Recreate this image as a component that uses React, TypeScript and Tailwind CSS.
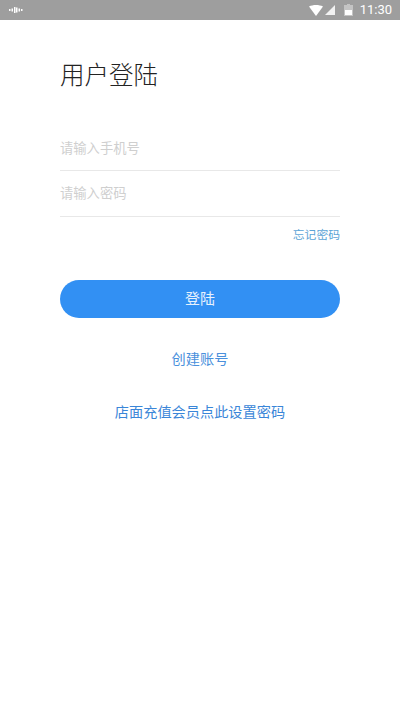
import { useState } from "react";

const font = { fontFamily: '"Noto Sans CJK SC", "Liberation Sans", sans-serif' };

function StatusBar() {
  return (
    <div className="flex h-5 items-center justify-between bg-[#9e9e9e] pl-[8px] pr-[8px]">
      <svg width="16" height="8" viewBox="0 0 16 8" fill="#fff">
        <rect x="1" y="3" width="1.5" height="2" />
        <rect x="3.5" y="2.5" width="1.5" height="3" />
        <rect x="6" y="1" width="1.5" height="6" />
        <rect x="8" y="1.5" width="1.5" height="5" />
        <rect x="10.5" y="2.5" width="1.5" height="3" />
        <rect x="13" y="3" width="1.5" height="2" />
      </svg>
      <div className="flex items-center">
        <svg width="14" height="11" viewBox="0 0 14 11" fill="#fff" className="mr-[2px]">
          <path d="M0 1.5C2 0.5 4.5 0 7 0s5 .5 7 1.5L7 11z" />
        </svg>
        <svg width="10" height="10" viewBox="0 0 10 10" fill="#f2f2f2" className="mr-[9px]">
          <path d="M10 0v10H0z" />
        </svg>
        <svg width="9" height="12" viewBox="0 0 9 12" className="mr-[7px]">
          <path d="M3 0h3v1h3v11H0V1h3z" fill="#c4c4c4" />
          <path d="M1 6h7v5H1z" fill="#fff" />
        </svg>
        <span className="text-[13px] leading-5 text-white" style={{ fontFamily: "Roboto, sans-serif" }}>
          11:30
        </span>
      </div>
    </div>
  );
}

export default function App() {
  const [phone, setPhone] = useState("");
  const [password, setPassword] = useState("");

  return (
    <div className="flex h-[711px] w-[400px] flex-col overflow-hidden bg-white" style={font}>
      <StatusBar />
      <main className="flex flex-col px-[60px]">
        <h1 className="mt-[36px] text-[24.5px] leading-[36px] font-light text-[#222]">用户登陆</h1>

        <div className="mt-[34px] flex h-[45px] items-center border-b border-[#e8e8e8]">
          <input
            value={phone}
            onChange={(e) => setPhone(e.target.value)}
            placeholder="请输入手机号"
            className="w-full text-[13.3px] text-[#333] outline-none placeholder:text-[#cfcfcf]"
          />
        </div>
        <div className="flex h-[46px] items-center border-b border-[#e8e8e8] pb-[1px]">
          <input
            type="password"
            value={password}
            onChange={(e) => setPassword(e.target.value)}
            placeholder="请输入密码"
            className="w-full text-[13.3px] text-[#333] outline-none placeholder:text-[#cfcfcf]"
          />
        </div>
        <div className="mt-[9px] text-right text-[11.8px] leading-[16px] text-[#5ba4d6]">忘记密码</div>

        <button className="mt-[38px] h-[38px] w-full rounded-full bg-[#3290f3] pb-[2px] text-[15px] text-[#e6f1fd]">
          登陆
        </button>

        <div className="mt-[30px] text-center text-[14.2px] leading-[20px] text-[#4a90dc]">创建账号</div>
        <div className="mt-[33px] text-center text-[14.2px] leading-[20px] text-[#3a86d8]">
          店面充值会员点此设置密码
        </div>
      </main>
    </div>
  );
}
